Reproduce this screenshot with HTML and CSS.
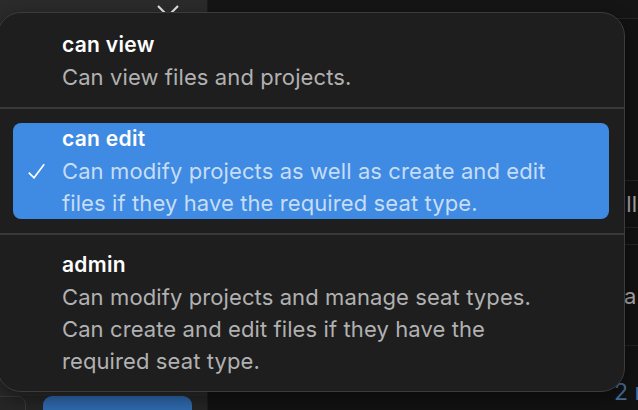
FILE: index.html
```html
<!DOCTYPE html>
<html lang="en">
<head>
<meta charset="utf-8">
<title>Permissions menu</title>
<link rel="stylesheet" href="styles.css">
</head>
<body>
<div class="app">
  <aside class="sidebar">
    <div class="side-head">
      <svg class="chev" width="24" height="14" viewBox="0 0 24 14"><polyline points="2,1 12,11 22,1" fill="none" stroke="#e4e4e4" stroke-width="2.2"/></svg>
    </div>
    <div class="side-foot">
      <div class="btn-ghost"></div>
      <div class="btn-primary"></div>
    </div>
  </aside>
  <main class="main">
    <div class="main-head"></div>
    <div class="main-gap"></div>
    <div class="row row-all"><span>all</span></div>
    <div class="row row-thin"></div>
    <div class="row row-a"><span>a</span></div>
    <div class="row row-more"><span>2 r</span></div>
  </main>
  <div class="menu">
    <div class="item">
      <div class="mark"></div>
      <div class="body">
        <div class="title">can view</div>
        <div class="desc">Can view files and projects.</div>
      </div>
    </div>
    <div class="sep"></div>
    <div class="item selected">
      <div class="mark">
        <svg width="17" height="16" viewBox="0 0 17 16"><polyline points="0.8,9.6 6,14.8 16.2,1.2" fill="none" stroke="#ffffff" stroke-width="1.7"/></svg>
      </div>
      <div class="body">
        <div class="title">can edit</div>
        <div class="desc">Can modify projects as well as create and edit<br>files if they have the required seat type.</div>
      </div>
    </div>
    <div class="sep"></div>
    <div class="item">
      <div class="mark"></div>
      <div class="body">
        <div class="title">admin</div>
        <div class="desc">Can modify projects and manage seat types.<br>Can create and edit files if they have the<br>required seat type.</div>
      </div>
    </div>
  </div>
</div>
</body>
</html>
```
FILE: styles.css
```css
* { box-sizing: border-box; }
html, body {
  margin: 0;
  padding: 0;
  width: 638px;
  height: 410px;
  overflow: hidden;
  background: #141414;
  font-family: Inter, "Noto Sans", sans-serif;
}
.app {
  position: relative;
  display: flex;
  width: 638px;
  height: 410px;
  overflow: hidden;
}
.sidebar {
  width: 208px;
  flex: none;
  background: #2b2b2b;
  display: flex;
  flex-direction: column;
  border-right: 1px solid #1c1c1c;
}
.side-head {
  padding: 5px 0 0 156px;
  height: 40px;
}
.chev { display: block; }
.side-foot {
  margin-top: auto;
  height: 14px;
  display: flex;
  align-items: flex-start;
  gap: 17px;
  margin-left: -14px;
  background: #252525;
}
.btn-ghost {
  width: 40px;
  height: 36px;
  flex: none;
  border: 1px solid #3a3a3a;
  border-radius: 8px;
  background: #262626;
}
.btn-primary {
  width: 149px;
  height: 36px;
  flex: none;
  border-radius: 9px;
  background: #2e69ad;
}
.main {
  flex: 1;
  min-width: 0;
  overflow: hidden;
  display: flex;
  flex-direction: column;
  background: #121212;
  color: #a8a8a8;
  font-size: 22px;
}
.main-head {
  height: 19px;
  border-bottom: 1px solid #262626;
  background: #151515;
}
.main-gap { height: 161px; }
.row { border-top: 1px solid #252525; }
.row-all {
  height: 47px;
  display: flex;
  align-items: center;
  justify-content: flex-end;
  padding-right: 1px;
  color: #a9a9a9;
}
.row-thin { height: 17px; }
.row-a {
  height: 101px;
  padding: 35px 0 0 416px;
  white-space: nowrap;
  color: #a9a9a9;
  line-height: 32px;
}
.row-more {
  flex: 1;
  padding: 30px 0 0 406px;
  white-space: nowrap;
  color: #48709c;
  font-size: 23px;
  line-height: 32px;
}
.menu {
  position: absolute;
  left: -3px;
  top: 12px;
  width: 628px;
  height: 380px;
  background: #1e1e1e;
  border: 1px solid #3b3b3b;
  border-radius: 24px;
  padding: 16px 15px 13px;
  box-shadow: 0 6px 18px rgba(0, 0, 0, 0.45);
}
.item {
  display: flex;
  align-items: center;
  border-radius: 8px;
}
.item .mark {
  width: 49px;
  flex: none;
  display: flex;
  align-items: center;
  padding-left: 15px;
}
.item .mark svg { display: block; }
.title {
  color: #ffffff;
  font-size: 21px;
  font-weight: 600;
  line-height: 32px;
  letter-spacing: 0.3px;
}
.desc {
  color: #b1b1b1;
  font-size: 22px;
  line-height: 32px;
  letter-spacing: 0.1px;
  white-space: nowrap;
}
.selected {
  background: #3f8ae2;
}
.selected .desc {
  color: #c6ddf6;
}
.sep {
  height: 2px;
  background: #393939;
  margin: 14px -15px;
}
```
